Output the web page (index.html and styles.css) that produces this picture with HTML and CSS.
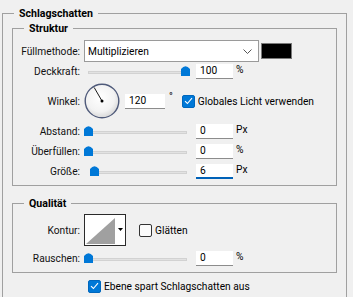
FILE: index.html
```html
<!DOCTYPE html>
<html lang="de">
<head>
<meta charset="utf-8">
<title>Schlagschatten</title>
<link rel="stylesheet" href="styles.css">
</head>
<body>
<fieldset class="group outer">
  <legend>Schlagschatten</legend>

  <fieldset class="group inner struktur">
    <legend>Struktur</legend>

    <div class="row row-mode">
      <span class="lbl">Füllmethode:</span>
      <div class="select">
        <span class="select-text">Multiplizieren</span>
        <svg class="chevron" width="9" height="5" viewBox="0 0 9 5"><path d="M0.5 0.5 L4.5 4.5 L8.5 0.5" fill="none" stroke="#555" stroke-width="1"/></svg>
      </div>
      <div class="swatch"></div>
    </div>

    <div class="row row-slider row-opacity">
      <span class="lbl">Deckkraft:</span>
      <div class="slider"><div class="track"></div><svg class="thumb" style="left:97px" width="9" height="11" viewBox="0 0 9 11"><path d="M0 4 Q4.5 -1.5 9 4 V11 H0 Z" fill="#0078d7"/></svg></div>
      <span class="field">100</span>
      <span class="unit">%</span>
    </div>

    <div class="row row-angle">
      <span class="lbl">Winkel:</span>
      <svg class="dial" width="36" height="36" viewBox="0 0 36 36">
        <defs>
          <radialGradient id="dg" cx="45%" cy="40%" r="60%">
            <stop offset="0" stop-color="#ffffff"/>
            <stop offset="0.7" stop-color="#f2f2f2"/>
            <stop offset="1" stop-color="#d8d8d8"/>
          </radialGradient>
        </defs>
        <circle cx="18" cy="18" r="16.8" fill="url(#dg)" stroke="#4f5a7a" stroke-width="1.4"/>
        <line x1="18" y1="18" x2="10.2" y2="4.5" stroke="#000" stroke-width="0.9"/>
        <circle cx="18" cy="18" r="1.5" fill="#000"/>
      </svg>
      <span class="field field-angle">120</span>
      <span class="deg">°</span>
      <span class="check checked"><svg width="9" height="8" viewBox="0 0 9 8"><path d="M1 4.2 L3.4 6.5 L8 1.2" fill="none" stroke="#fff" stroke-width="1.1"/></svg></span>
      <span class="check-label">Globales Licht verwenden</span>
    </div>

    <div class="row row-slider">
      <span class="lbl">Abstand:</span>
      <div class="slider"><div class="track"></div><svg class="thumb" style="left:0px" width="9" height="11" viewBox="0 0 9 11"><path d="M0 4 Q4.5 -1.5 9 4 V11 H0 Z" fill="#0078d7"/></svg></div>
      <span class="field">0</span>
      <span class="unit">Px</span>
    </div>

    <div class="row row-slider">
      <span class="lbl">Überfüllen:</span>
      <div class="slider"><div class="track"></div><svg class="thumb" style="left:0px" width="9" height="11" viewBox="0 0 9 11"><path d="M0 4 Q4.5 -1.5 9 4 V11 H0 Z" fill="#0078d7"/></svg></div>
      <span class="field">0</span>
      <span class="unit">%</span>
    </div>

    <div class="row row-slider">
      <span class="lbl">Größe:</span>
      <div class="slider slider-inset"><div class="track"></div><svg class="thumb" style="left:2px" width="9" height="11" viewBox="0 0 9 11"><path d="M0 4 Q4.5 -1.5 9 4 V11 H0 Z" fill="#0078d7"/></svg></div>
      <span class="field focused">6</span>
      <span class="unit">Px</span>
    </div>
  </fieldset>

  <fieldset class="group inner qualitaet">
    <legend>Qualität</legend>

    <div class="row row-contour">
      <span class="lbl">Kontur:</span>
      <div class="contour">
        <svg class="contour-preview" width="29" height="28" viewBox="0 0 29 28"><rect width="29" height="28" fill="#fff"/><path d="M0 28 L29 2 V28 Z" fill="#a0a0a0"/></svg>
        <div class="contour-drop"><svg width="5" height="3" viewBox="0 0 5 3"><path d="M0 0 H5 L2.5 3 Z" fill="#000"/></svg></div>
      </div>
      <span class="check unchecked"></span>
      <span class="check-label">Glätten</span>
    </div>

    <div class="row row-slider">
      <span class="lbl">Rauschen:</span>
      <div class="slider"><div class="track"></div><svg class="thumb" style="left:0px" width="9" height="11" viewBox="0 0 9 11"><path d="M0 4 Q4.5 -1.5 9 4 V11 H0 Z" fill="#0078d7"/></svg></div>
      <span class="field">0</span>
      <span class="unit">%</span>
    </div>
  </fieldset>

  <div class="row row-bottom">
    <span class="check checked"><svg width="9" height="8" viewBox="0 0 9 8"><path d="M1 4.2 L3.4 6.5 L8 1.2" fill="none" stroke="#fff" stroke-width="1.1"/></svg></span>
    <span class="check-label">Ebene spart Schlagschatten aus</span>
  </div>
</fieldset>
</body>
</html>
```

FILE: styles.css
```css
html, body {
  margin: 0;
  padding: 0;
}

body {
  background: #f0f0f0;
  font-family: Roboto, "Noto Sans", sans-serif;
  font-size: 10.2px;
  color: #111;
  width: 353px;
  height: 297px;
  overflow: hidden;
}

.group {
  border: 1px solid #a0a0a0;
  margin: 0;
  padding: 0;
  min-width: 0;
}

.group > legend {
  font-weight: bold;
  font-size: 10.6px;
  line-height: 13px;
  padding: 0 5px;
  color: #000;
}

.outer {
  margin: 7px 6px 0 2px;
  padding: 0 9px 40px 9px;
}

.outer > legend {
  margin-left: 2px;
}

.inner > legend {
  margin-left: 11px;
}

.struktur {
  margin-top: 2px;
  padding: 5px 0 4px 0;
}

.qualitaet {
  margin-top: 11px;
  padding: 4px 0 4px 0;
}

.row {
  display: flex;
  align-items: center;
}

.lbl {
  flex: none;
  width: 67px;
  margin-right: 4px;
  text-align: right;
  white-space: nowrap;
}

/* Füllmethode */
.row-mode {
  height: 22px;
}

.select {
  box-sizing: border-box;
  width: 175px;
  height: 22px;
  background: #fff;
  border: 1px solid #9a9a9a;
  display: flex;
  align-items: center;
  justify-content: space-between;
  padding: 0 6px 0 3px;
}

.select-text {
  color: #000;
}

.chevron {
  display: block;
}

.swatch {
  box-sizing: border-box;
  width: 31px;
  height: 16px;
  margin-left: 2px;
  background: #000;
  border: 1px solid #7a7a7a;
}

/* slider rows */
.row-slider {
  height: 20px;
}

.row-opacity {
  height: 18px;
}

.slider {
  position: relative;
  width: 106px;
  height: 12px;
  margin-right: 6px;
  flex: none;
}

.track {
  position: absolute;
  left: 4px;
  right: 3px;
  top: 6px;
  height: 3px;
  box-sizing: border-box;
  background: #e2e2e2;
  border: 1px solid #d2d2d2;
}

.slider-inset {
  margin-left: 4px;
  width: 102px;
}

.thumb {
  position: absolute;
  top: 0;
  display: block;
}

.field {
  box-sizing: border-box;
  width: 37px;
  height: 15px;
  background: #fff;
  border-bottom: 1px solid #8c8c8c;
  padding-left: 4px;
  line-height: 14px;
  color: #000;
  flex: none;
}

.field.focused {
  border-bottom: 2px solid #0062b8;
  line-height: 13px;
}

.unit {
  margin-left: 3px;
  margin-top: -4px;
  color: #000;
}

/* Winkel */
.row-angle {
  height: 36px;
  margin-top: 3px;
  margin-bottom: 2px;
}

.dial {
  display: block;
  flex: none;
}

.field-angle {
  width: 40px;
  margin-left: 5px;
}

.deg {
  margin-left: 4px;
  margin-top: -10px;
  color: #000;
}

.check {
  box-sizing: border-box;
  width: 13px;
  height: 13px;
  border-radius: 2px;
  flex: none;
  display: flex;
  align-items: center;
  justify-content: center;
}

.check.checked {
  background: #0078d7;
  border: 1px solid #0067bd;
}

.check.unchecked {
  background: #fbfbfb;
  border: 1px solid #333;
}

.row-angle .check {
  margin-left: 9px;
}

.check-label {
  margin-left: 3px;
  white-space: nowrap;
  color: #000;
}

/* Kontur */
.row-contour {
  height: 32px;
}

.contour {
  box-sizing: border-box;
  width: 42px;
  height: 32px;
  border: 1px solid #2a2a2a;
  background: #fff;
  display: flex;
  padding: 1px 0 1px 1px;
  flex: none;
}

.contour-preview {
  display: block;
}

.contour-drop {
  flex: 1;
  display: flex;
  justify-content: center;
  padding-top: 12px;
}

.contour-drop svg {
  display: block;
}

.row-contour .check {
  margin-left: 13px;
}

.qualitaet .row-slider {
  margin-top: 2px;
}

/* bottom */
.row-bottom {
  height: 20px;
  margin-top: 3px;
  padding-left: 76px;
}
```
